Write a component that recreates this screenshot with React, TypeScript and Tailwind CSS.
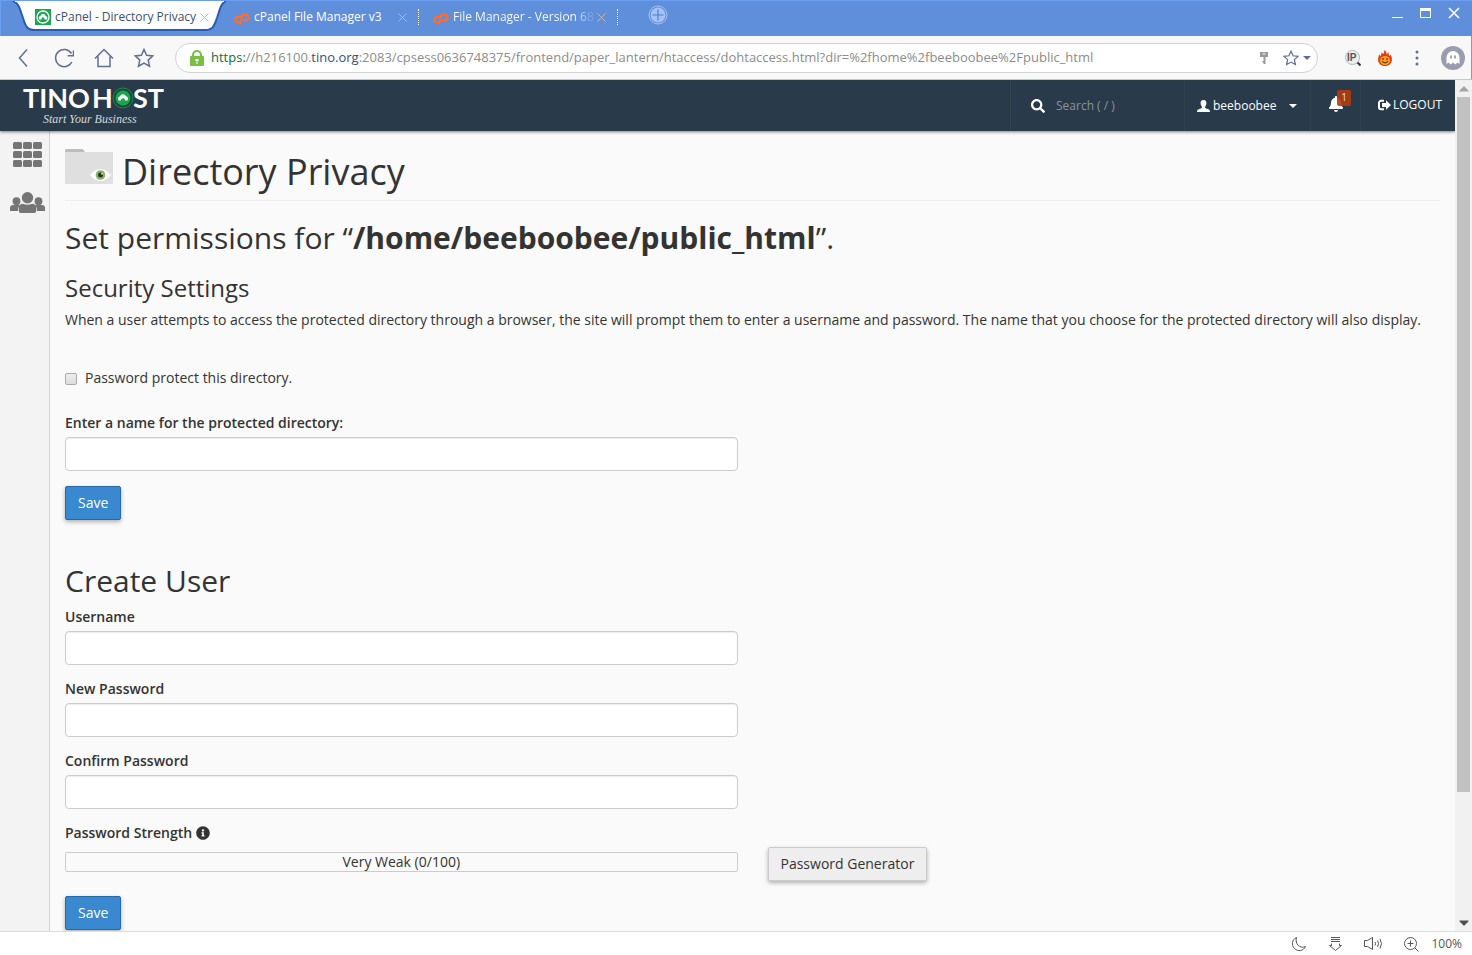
import React, { useState } from 'react';
import { FaSearch, FaBell, FaInfoCircle, FaCaretUp, FaCaretDown } from 'react-icons/fa';

interface FieldProps {
  id: string;
  label: string;
  type?: string;
}

const Field: React.FC<FieldProps> = ({ id, label, type = 'text' }) => {
  const [value, setValue] = useState('');

  return (
    <div>
      <label htmlFor={id} className="block leading-5 font-semibold">{label}</label>
      <input
        id={id}
        type={type}
        value={value}
        onChange={(e) => setValue(e.target.value)}
        className="mt-1 block h-[34px] w-full rounded border border-[#ccc] bg-white px-3 shadow-[inset_0_1px_1px_rgba(0,0,0,0.075)] outline-none focus:border-[#66afe9]"
      />
    </div>
  );
};

const SaveButton: React.FC = () => (
  <button className="block h-[34px] rounded-xs border border-[#2868a8] bg-[#3889cf] px-3 text-white shadow-[0_2px_4px_rgba(0,0,0,0.3)]">
    Save
  </button>
);

const CloseTabIcon = () => (
  <svg className="size-[9px]" viewBox="0 0 9 9" fill="none" stroke="#b9bcc4" strokeWidth="1">
    <path d="M.5.5l8 8M8.5.5l-8 8" />
  </svg>
);

const CPanelIcon = () => (
  <svg className="mt-1 h-3 w-4 shrink-0" viewBox="0 0 16 12" fill="none" stroke="#ff6c2c" strokeWidth="2.3">
    <path d="M7 3.900H4.200C.6 3.900.4 9.300 3.600 9.300h1.600" />
    <path d="M5.800 11.500L8.400 1.700h3.400c3.900 0 3.600 5.600 0 5.600H9" strokeLinejoin="round" />
  </svg>
);

const TinoIcon = () => (
  <svg className="size-4 shrink-0" viewBox="0 0 16 16">
    <rect width="16" height="16" fill="#17a84b" />
    <circle cx="8" cy="8" r="6" fill="none" stroke="#fff" strokeWidth="1.3" />
    <path d="M4 10.5C3.2 8 4.5 7 5.5 7 6.5 4 9.7 4.2 10.5 6.8 12 7 12.8 8.5 12 10.5H9.5V9.5L8 8 6.5 9.5v1z" fill="#fff" />
  </svg>
);

const TabStrip: React.FC = () => (
  <div className="flex h-9 shrink-0 border-t border-l border-[#6a9df0] bg-[#5f8edb] text-xs">
    <div className="relative flex h-8 w-[228px] shrink-0 items-center pl-[34px] text-[#3c4f72]">
      <svg className="absolute top-0 left-1 h-8 w-[222px]" viewBox="0 0 222 32">
        <path d="M8 0C14 2 15 9 18 17c3 10 5 12 12 12h170c8 0 9-4 12-12 3-9 4-15 9-17z" fill="#fff" stroke="#2a5db0" strokeWidth="2" />
        <path d="M10 0h209v1H10z" fill="#fff" />
      </svg>
      <div className="relative flex items-center">
        <TinoIcon />
        <span className="ml-1 w-[145px] whitespace-nowrap">cPanel - Directory Privacy</span>
        <button aria-label="Close tab"><CloseTabIcon /></button>
      </div>
    </div>
    <div className="flex h-8 w-[190px] shrink-0 items-center pl-[5px] text-white">
      <CPanelIcon />
      <span className="ml-1 w-36 whitespace-nowrap">cPanel File Manager v3</span>
      <button aria-label="Close tab"><CloseTabIcon /></button>
      <span className="ml-[11px] h-4 border-l border-dotted border-white" />
    </div>
    <div className="flex h-8 w-[199px] shrink-0 items-center pl-[14px] text-white">
      <CPanelIcon />
      <span className="ml-1 w-36 bg-linear-to-r from-white from-85% to-[#7fa6e4] to-95% bg-clip-text whitespace-nowrap text-transparent">File Manager - Version 68</span>
      <button aria-label="Close tab"><CloseTabIcon /></button>
      <span className="ml-[11px] h-4 border-l border-dotted border-white" />
    </div>
    <button aria-label="New tab" className="ml-[30px] flex h-7 items-center">
      <svg className="size-5" viewBox="0 0 20 20">
        <circle cx="10" cy="10" r="7.500" fill="#a6c2f5" />
        <circle cx="10" cy="10" r="9" fill="none" stroke="#a6c2f5" />
        <path d="M10 4.500v11M4.500 10h11" stroke="#4a7fd6" strokeWidth="1.2" />
      </svg>
    </button>
    <div className="ml-auto flex h-6 items-center gap-4 pr-3">
      <button aria-label="Minimize"><svg className="size-3" viewBox="0 0 12 12"><path d="M0 10.500h11" stroke="#fff" strokeWidth="1" /></svg></button>
      <button aria-label="Maximize"><svg className="size-3" viewBox="0 0 12 12"><path d="M.5 1.500h10v9H.5z" fill="none" stroke="#fff" /><path d="M0 1h11v3H0z" fill="#fff" /></svg></button>
      <button aria-label="Close"><svg className="size-3" viewBox="0 0 12 12"><path d="M1 1l10 10M11 1L1 11" stroke="#fff" strokeWidth="1.6" /></svg></button>
    </div>
  </div>
);

const starPath = 'M10 1.500l2.600 5.700 6.200.7-4.600 4.200 1.300 6.100L10 15.100l-5.500 3.100 1.300-6.100L1.200 7.900l6.200-.7z';

const Toolbar: React.FC = () => (
  <div className="flex h-11 shrink-0 items-center border-r border-b border-r-[#6a9df0] border-b-[#c8c8c8] bg-[#f8f8f8] pr-[6px] pl-3.5">
    <div className="flex w-[161px] shrink-0 items-center gap-5 text-[#5f6f91]">
      <button aria-label="Back">
        <svg className="size-5" viewBox="0 0 20 20" fill="none" stroke="currentColor" strokeWidth="1.500"><path d="M13 1.500L5.500 10l7.500 8.500" /></svg>
      </button>
      <button aria-label="Reload">
        <svg className="size-5" viewBox="0 0 20 20" fill="none" stroke="currentColor" strokeWidth="1.500"><path d="M17.800 14A8.600 8.600 0 1 1 17.500 5.500" /><path d="M19.500 2.500v5.300h-5.800" /></svg>
      </button>
      <button aria-label="Home">
        <svg className="size-5" viewBox="0 0 20 20" fill="none" stroke="currentColor" strokeWidth="1.500"><path d="M1 10.500L10 1.500l9 9M4 8.500V18.500h12V8.500" /></svg>
      </button>
      <button aria-label="Favorites">
        <svg className="size-5" viewBox="0 0 20 20" fill="none" stroke="currentColor" strokeWidth="1.500"><path d={starPath} /></svg>
      </button>
    </div>
    <div className="flex h-[30px] w-[1143px] min-w-0 shrink items-center rounded-full border border-[#d2d2d2] bg-white pr-1.5 pl-3.5 text-[#8c8c8c]">
      <svg className="h-4 w-3.5 shrink-0" viewBox="0 0 14 16">
        <path d="M3 8V5a4 4 0 0 1 8 0v3" fill="none" stroke="#79bf43" strokeWidth="2" />
        <rect y="6" width="14" height="10" rx="1" fill="#79bf43" />
        <path d="M5.500 9h3v2h-1v3h-1v-3h-1z" fill="#fff" />
      </svg>
      <p className="ml-[7px] grow truncate text-[13px]">
        <span className="text-[#0b7043]">https:</span>//h216100.<span className="text-[#34507c]">tino.org</span>:2083/cpsess0636748375/frontend/paper_lantern/htaccess/dohtaccess.html?dir=%2fhome%2fbeeboobee%2Fpublic_html
      </p>
      <button aria-label="Saved passwords" className="mr-[15px]">
        <svg className="h-3 w-2" viewBox="0 0 8 12"><path d="M0 0h8v5H5.500v7H3.500v-1.500h-1V9h1V5H0z" fill="#999" /><path d="M2.500 2h3" stroke="#fff" /></svg>
      </button>
      <button aria-label="Bookmark" className="mr-1 text-[#5f6f91]">
        <svg className="size-4" viewBox="0 0 20 20" fill="none" stroke="currentColor" strokeWidth="1.500"><path d={starPath} /></svg>
      </button>
      <button aria-label="Bookmark list" className="text-[#5f6f91]">
        <svg className="h-1 w-2" viewBox="0 0 8 4"><path d="M0 0h8L4 4z" fill="currentColor" /></svg>
      </button>
    </div>
    <div className="ml-auto flex shrink-0 items-center">
      <button aria-label="IP lookup" className="mr-[17px]">
        <svg className="size-4" viewBox="0 0 16 16">
          <circle cx="7.500" cy="7.500" r="7" fill="#eee" stroke="#aeb8bf" />
          <path d="M12.500 12.500l3 3" stroke="#333" strokeWidth="2" />
          <text x="2" y="11" fontSize="10" fontWeight="bold" fill="#555" fontFamily="Liberation Sans, sans-serif">IP</text>
        </svg>
      </button>
      <button aria-label="Flame extension" className="mr-[23px]">
        <svg className="h-4 w-3.5" viewBox="0 0 14 16">
          <path d="M6.500 0c1.500 1 2 2.500 2.200 4.500L10.500 2c0 2 .2 3 1 4l1.500-1.500c.2 1.500.9 3 .9 5C13.900 13.500 11 16 7 16S.1 13.500.1 9.500c0-2 .7-3.500.9-5L2.500 6c.8-1 .8-2 1-3.500L5.200 4C5.800 3 6.500 1.500 6.500 0z" fill="#e23b16" />
          <ellipse cx="7" cy="10.500" rx="5" ry="4.500" fill="#fba01c" />
          <path d="M5 8v2M9 8v2M4 11.500q3 3 6 0" fill="none" stroke="#4a1d05" strokeWidth="1" />
        </svg>
      </button>
      <button aria-label="Menu" className="mr-[22px]">
        <svg className="h-4 w-1" viewBox="0 0 4 16" fill="#5f6f91"><circle cx="2" cy="2" r="1.500" /><circle cx="2" cy="8" r="1.500" /><circle cx="2" cy="14" r="1.500" /></svg>
      </button>
      <button aria-label="Profile">
        <svg className="size-6" viewBox="0 0 24 24">
          <circle cx="12" cy="12" r="12" fill="#9a9db0" />
          <path d="M5.500 18V11.500a6.500 6.500 0 0 1 13 0V18l-2-1.500-2.200 2L12 16.500l-2.300 2-2.200-2z" fill="#fff" />
          <path d="M10 9.500v3M14 9.500v3" stroke="#9a9db0" strokeWidth="1.800" />
        </svg>
      </button>
    </div>
  </div>
);

const Logo = () => (
  <a href="#" aria-label="Tino Host" className="ml-[22px]">
    <svg className="h-[51px] w-[146px]" viewBox="0 0 146 51" fill="#fff">
      <g fontFamily="Lato, sans-serif" fontWeight="bold" fontSize="27">
        <text x="1" y="28">TINO</text>
        <text x="70" y="28">H</text>
        <text x="111" y="28">ST</text>
      </g>
      <circle cx="101" cy="18" r="10" fill="#23453f" stroke="#178a48" />
      <circle cx="101" cy="18" r="7.500" fill="#17a84b" />
      <path d="M96.500 20.500c-1-2.500 0-4 1.500-4 1-3 5-3 6 0 2 0 2.500 2 1.500 4H103v-1l-2-1.500-2 1.500v1z" />
      <text x="21" y="43" fontFamily="Liberation Serif, serif" fontStyle="italic" fontSize="12" fill="#d5dade">Start Your Business</text>
    </svg>
  </a>
);

const NavBar: React.FC = () => (
  <header className="relative z-10 flex h-[51px] shrink-0 bg-[#293a4a] text-xs text-white shadow-[0_1px_3px_rgba(0,0,0,0.5)]">
    <Logo />
    <div className="ml-auto flex w-[174px] items-center border-l border-[#31424f] pl-5">
      <FaSearch className="size-3.5" />
      <input aria-label="Search" placeholder="Search ( / )" className="ml-[11px] w-24 bg-transparent outline-none placeholder:text-[#8b939b]" />
    </div>
    <button className="flex w-[126px] items-center border-l border-[#31424f] pl-3">
      <svg className="h-3 w-[13px]" viewBox="0 0 13 12" fill="#fff">
        <path d="M6.500 0C8.800 0 9.600 1.500 9.400 3.600 9.200 5.300 8.500 6.200 8 7c0 1 .5 1.300 2 1.800 2 .7 3 1.200 3 3.200H0c0-2 1-2.500 3-3.200C4.500 8.300 5 8 5 7 4.500 6.200 3.800 5.300 3.600 3.600 3.400 1.500 4.200 0 6.500 0z" />
      </svg>
      <span className="ml-[3px]">beeboobee</span>
      <svg className="ml-[13px] h-1 w-2" viewBox="0 0 8 4" fill="#fff"><path d="M0 0h8L4 4z" /></svg>
    </button>
    <button aria-label="Notifications" className="relative flex w-[50px] items-center border-l border-[#31424f] pb-1 pl-[17px]">
      <FaBell className="size-4" />
      <span className="absolute top-2.5 left-[26px] flex h-4 w-3.5 items-center justify-center rounded-xs bg-[#b13c0f]/90 text-[10px] text-[#f0d8cf]">1</span>
    </button>
    <a href="#" className="flex w-[95px] items-center border-l border-[#31424f] pb-0.5 pl-[17px]">
      <svg className="h-3 w-[13px]" viewBox="0 0 13 12">
        <path d="M6 1.800H3A2 2 0 0 0 1 3.800v4.400a2 2 0 0 0 2 2h3" fill="none" stroke="#fff" strokeWidth="2" />
        <path d="M4 4h4V1.200L13 6l-5 4.800V8H4z" fill="#fff" />
      </svg>
      <span className="ml-0.5">LOGOUT</span>
    </a>
  </header>
);

const UsersIcon = () => (
  <svg className="h-[21px] w-[35px]" viewBox="0 0 35 21" fill="currentColor">
    <circle cx="6.500" cy="9.200" r="3.900" />
    <circle cx="28.500" cy="9.200" r="3.900" />
    <path d="M0 19v-3q0-3 3-3h7q-2 2-2 6z" />
    <path d="M35 19v-3q0-3-3-3h-7q2 2 2 6z" />
    <circle cx="17.500" cy="5.700" r="5.700" />
    <path d="M8.800 19v-3q0-4 4-4.200 4.700 2 9.400 0 4 .2 4 4.200v3q0 2-2 2H10.800q-2 0-2-2z" />
  </svg>
);

const SideBar: React.FC = () => (
  <nav className="flex w-[50px] shrink-0 flex-col items-center border-r border-[#d2d2d2] bg-[#f3f3f3] pt-[11px] pl-1.5 text-[#757575] shadow-[1px_0_3px_rgba(0,0,0,0.2)]">
    <a href="#" aria-label="Home">
      <svg className="h-[25px] w-[29px]" viewBox="0 0 29 25" fill="currentColor">
        {[0, 9, 18].map(y => [0, 10, 20].map(x => (
          <rect key={`${x}-${y}`} x={x} y={y} width="9" height="7" rx="1.500" />
        )))}
      </svg>
    </a>
    <a href="#" aria-label="User Manager" className="mt-[25px]"><UsersIcon /></a>
  </nav>
);

const FolderIcon = () => (
  <svg className="h-9 w-12" viewBox="0 0 48 36">
    <path d="M0 4V2.500Q0 1 1.500 1H17q1 0 1.500 1L20 4z" fill="#bdbdbd" />
    <path d="M0 4h48v31q0 1-1 1H1q-1 0-1-1z" fill="#dfdfdf" />
    <path d="M25 27q10-12 21 0-11 12-21 0z" fill="#fff" />
    <circle cx="35.500" cy="27" r="4.800" fill="#8bb65c" />
    <circle cx="35.500" cy="27" r="2.500" fill="#26313a" />
    <circle cx="37" cy="25.800" r="1" fill="#cfe0bd" />
  </svg>
);

const DirectoryPrivacy: React.FC = () => {
  const [isProtected, setIsProtected] = useState(false);

  return (
    <main className="min-w-0 grow bg-[#fafafa] px-[15px]">
      <h1 className="flex h-[70px] items-center gap-[9px] border-b border-[#eee] text-4xl">
        <FolderIcon />
        <span className="mt-3">Directory Privacy</span>
      </h1>
      <h2 className="mt-5 text-3xl leading-[33px]">Set permissions for “<strong>/home/beeboobee/public_html</strong>”.</h2>
      <h3 className="mt-[21px] text-2xl leading-[26px]">Security Settings</h3>
      <p className="mt-[9px] leading-5">When a user attempts to access the protected directory through a browser, the site will prompt them to enter a username and password. The name that you choose for the protected directory will also display.</p>

      <label className="mt-[38px] flex items-center gap-2 leading-5">
        <input
          type="checkbox"
          checked={isProtected}
          onChange={(e) => setIsProtected(e.target.checked)}
          className="mt-0.5 size-3 appearance-none rounded-xs border border-[#a9a9a9] bg-linear-to-b from-[#eee] to-[#dcdcdc] checked:bg-[#3889cf]"
        />
        Password protect this directory.
      </label>

      <div className="mt-[25px] grid grid-cols-2 gap-[30px]">
        <Field id="resname" label="Enter a name for the protected directory:" />
      </div>
      <div className="mt-[15px]"><SaveButton /></div>

      <h2 className="mt-11 text-3xl leading-[33px]">Create User</h2>
      <div className="mt-2.5 grid grid-cols-2 gap-[30px]">
        <div className="space-y-3.5">
          <Field id="user" label="Username" />
          <Field id="password" label="New Password" type="password" />
          <Field id="password2" label="Confirm Password" type="password" />
        </div>
      </div>
      <div className="mt-3.5 flex items-center gap-1 leading-5 font-semibold">
        Password Strength <FaInfoCircle className="size-3.5" />
      </div>
      <div className="mt-1 grid grid-cols-2 items-center gap-[30px]">
        <div className="mb-1 h-5 rounded-xs border border-[#ccc] text-center leading-[18px]">Very Weak (0/100)</div>
        <button className="h-[34px] justify-self-start rounded-xs border border-[#ccc] bg-[#eee] px-3 shadow-[0_2px_4px_rgba(0,0,0,0.3)]">Password Generator</button>
      </div>
      <div className="mt-[15px]"><SaveButton /></div>
    </main>
  );
};

const ScrollBar = () => (
  <div className="flex w-[17px] shrink-0 flex-col items-center bg-[#f1f1f1]">
    <FaCaretUp className="h-[17px] w-2.5 shrink-0 text-[#a3a3a3]" />
    <div className="h-[695px] w-[13px] bg-[#c1c1c1]" />
    <FaCaretDown className="mt-auto h-[17px] w-2.5 shrink-0 text-[#505050]" />
  </div>
);

const StatusBar: React.FC = () => (
  <footer className="flex h-6 shrink-0 items-center justify-end gap-5 border-t border-[#dcdcdc] bg-white pr-2.5 text-[#555]">
    <button aria-label="Night mode"><svg className="size-4" viewBox="0 0 16 16" fill="none" stroke="currentColor"><path d="M5.500 1.500C1 3.500 0 9 3.500 12.500s9 2.500 11-2C9 13 3.500 8 5.500 1.500z" /></svg></button>
    <button aria-label="Downloads"><svg className="size-4" viewBox="0 0 16 16" fill="none" stroke="currentColor"><path d="M4 1.500h9M4 3.500h9M4 5.500h9M4.500 7.500v2h-2l6 5 6-5h-2v-2" /></svg></button>
    <button aria-label="Sound"><svg className="h-4 w-5" viewBox="0 0 20 16" fill="none" stroke="currentColor"><path d="M1.500 4.500h3l5-3v12l-5-3h-3zM12 6q1 1.500 0 3.500M14.500 4.500q2 3 0 6.500M17 3q3 4.500 0 9.500" /></svg></button>
    <div className="flex items-center gap-3">
      <button aria-label="Zoom"><svg className="size-4" viewBox="0 0 16 16" fill="none" stroke="currentColor"><circle cx="7.500" cy="7.500" r="6" /><path d="M7.500 4.500v6M4.500 7.500h6M12 12l3.500 3.500" /></svg></button>
      <span className="text-xs">100%</span>
    </div>
  </footer>
);

const App: React.FC = () => {
  return (
    <div className="flex h-screen flex-col overflow-hidden bg-white font-['Open_Sans',sans-serif] text-sm text-[#333]">
      <TabStrip />
      <Toolbar />
      <div className="flex min-h-0 grow">
        <div className="flex min-w-0 grow flex-col overflow-hidden">
          <NavBar />
          <div className="flex min-h-0 grow">
            <SideBar />
            <DirectoryPrivacy />
          </div>
        </div>
        <ScrollBar />
      </div>
      <StatusBar />
    </div>
  );
};

export default App;
